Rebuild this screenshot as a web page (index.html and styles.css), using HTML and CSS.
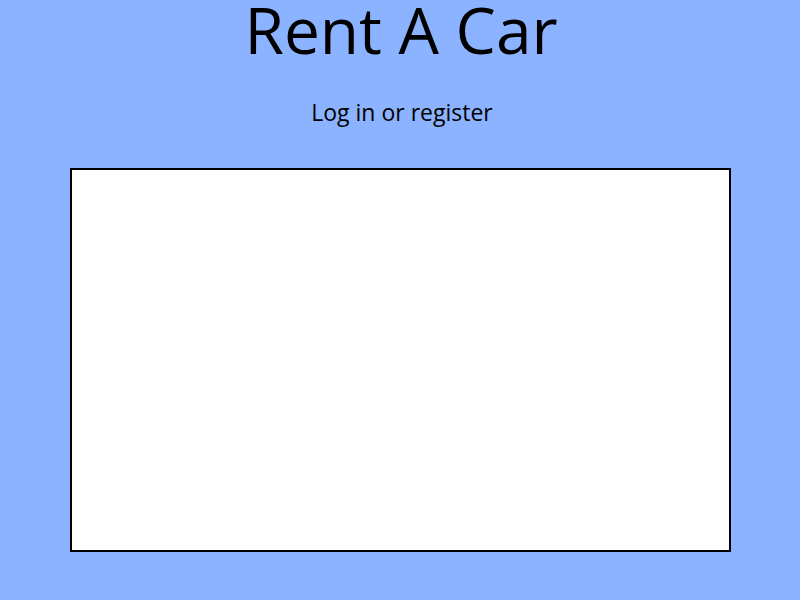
FILE: index.html
```html
<!DOCTYPE html>
<html>
<head>
<meta charset="utf-8">
<link rel="stylesheet" href="styles.css">
</head>
<body>
<div class="page">
  <h1 class="title">Rent A Car</h1>
  <p class="subtitle">Log in or register</p>
  <div class="panel"></div>
</div>
</body>
</html>
```
FILE: styles.css
```css
html, body {
  margin: 0;
  padding: 0;
  background: #8cb3ff;
  height: 100%;
}
.page {
  display: flex;
  flex-direction: column;
  align-items: center;
  font-family: "Open Sans", sans-serif;
  color: #000;
}
.title {
  margin: 0;
  font-weight: 400;
  font-size: 64px;
  line-height: 60px;
  margin-left: 2px;
}
.subtitle {
  margin: 37px 0 0 0;
  font-size: 23px;
  line-height: 30px;
  margin-left: 4px;
}
.panel {
  margin-top: 41px;
  width: 657px;
  height: 380px;
  background: #fff;
  border: 2px solid #000;
  margin-left: 1px;
}
```
